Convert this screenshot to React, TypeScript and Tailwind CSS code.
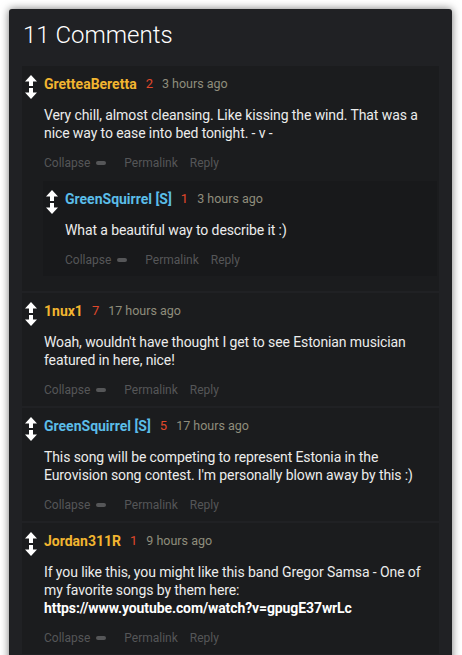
type Comment = {
  user: string;
  op?: boolean;
  score: number;
  time: string;
  body: React.ReactNode;
  replies?: Comment[];
};

const comments: Comment[] = [
  {
    user: "GretteaBeretta",
    score: 2,
    time: "3 hours ago",
    body: "Very chill, almost cleansing. Like kissing the wind. That was a nice way to ease into bed tonight. - v -",
    replies: [
      {
        user: "GreenSquirrel [S]",
        op: true,
        score: 1,
        time: "3 hours ago",
        body: "What a beautiful way to describe it :)",
      },
    ],
  },
  {
    user: "1nux1",
    score: 7,
    time: "17 hours ago",
    body: "Woah, wouldn't have thought I get to see Estonian musician featured in here, nice!",
  },
  {
    user: "GreenSquirrel [S]",
    op: true,
    score: 5,
    time: "17 hours ago",
    body: "This song will be competing to represent Estonia in the Eurovision song contest. I'm personally blown away by this :)",
  },
  {
    user: "Jordan311R",
    score: 1,
    time: "9 hours ago",
    body: (
      <>
        If you like this, you might like this band Gregor Samsa - One of my favorite songs by them here:{" "}
        <a className="font-bold text-white">https://www.youtube.com/watch?v=gpugE37wrLc</a>
      </>
    ),
  },
];

function VoteArrows() {
  return (
    <svg width="12" height="24" viewBox="0 0 12 24" className="shrink-0 mt-[1px]" fill="#ffffff">
      <path d="M6 0 L12 6.5 L8 6.5 L8 11 L4 11 L4 6.5 L0 6.5 Z" />
      <path d="M4 13 L8 13 L8 17.5 L12 17.5 L6 24 L0 17.5 L4 17.5 Z" />
    </svg>
  );
}

function CommentCard({ c, nested }: { c: Comment; nested?: boolean }) {
  return (
    <div
      className={
        nested
          ? "ml-[-1px] mr-[2px] mt-2 mb-[9px] bg-[#18191b] pt-2 pb-[6px]"
          : "bg-[#1b1c1e] pt-2 pb-[6px]"
      }
    >
      <div className="flex">
        <div className="w-[22px] shrink-0 pl-[3px]">
          <VoteArrows />
        </div>
        <div className="flex-1 min-w-0 pr-3">
          <div className="flex items-center h-5">
            <span className={`text-[14px] font-bold ${c.op ? "text-[#5bbde8]" : "text-[#f2b530]"}`}>{c.user}</span>
            <span className="ml-[9px] text-[13px] text-[#e0482b]">{c.score}</span>
            <span className="ml-[9px] text-[12.5px] text-[#8f8d7c]">{c.time}</span>
          </div>
          <p className="mt-3 text-[14px] leading-[18px] tracking-[-0.1px] text-[#ececec]">{c.body}</p>
          <div className="mt-[11px] flex items-center h-5 text-[12px] text-[#555658]">
            <span>Collapse</span>
            <span className="ml-[6px] inline-block w-[10px] h-[4px] rounded-[2px] bg-[#555658]" />
            <span className="ml-[18px]">Permalink</span>
            <span className="ml-3">Reply</span>
          </div>
        </div>
      </div>
      {c.replies?.map((r, i) => (
        <div key={i} className="pl-[22px]">
          <CommentCard c={r} nested />
        </div>
      ))}
    </div>
  );
}

export default function App() {
  return (
    <div className="min-h-screen bg-white pt-[9px] pl-[9px] pr-[10px]" style={{ fontFamily: "Roboto, 'Liberation Sans', sans-serif" }}>
      <div className="rounded-[3px] bg-[#202124] shadow-[0_0_8px_rgba(0,0,0,0.55)] px-[13px] pt-3 pb-4">
        <h1 className="text-[24px] leading-[28px] font-light text-white pl-[1px] mb-[17px]">11 Comments</h1>
        <div className="flex flex-col gap-[2px]">
          {comments.map((c, i) => (
            <CommentCard key={i} c={c} />
          ))}
        </div>
      </div>
    </div>
  );
}
